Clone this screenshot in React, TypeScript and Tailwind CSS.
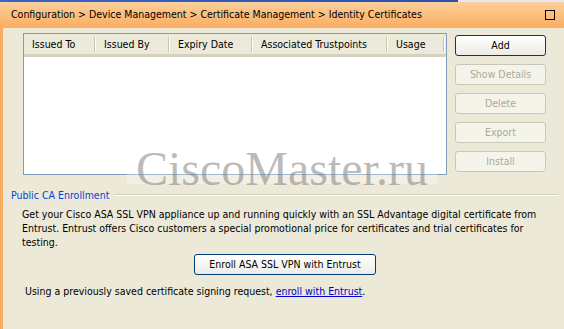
import React from "react";

const font = { fontFamily: '"DejaVu Sans Condensed", "Liberation Sans", sans-serif' };

function Btn({ label, enabled = false, className = "" }: { label: string; enabled?: boolean; className?: string }) {
  return (
    <div
      className={
        "flex items-center justify-center rounded-[3px] border text-[10.5px] " +
        (enabled
          ? "border-[#003c74] bg-gradient-to-b from-[#ffffff] to-[#ecebe6] text-black"
          : "border-[#c9c7ba] bg-[#f5f4ea] text-[#aca899]") +
        " " +
        className
      }
    >
      {label}
    </div>
  );
}

const cols = [
  { label: "Issued To", w: "w-[72px]" },
  { label: "Issued By", w: "w-[74px]" },
  { label: "Expiry Date", w: "w-[83px]" },
  { label: "Associated Trustpoints", w: "w-[135px]" },
  { label: "Usage", w: "w-[57px]" },
];

export default function App() {
  return (
    <div className="relative w-[564px] h-[329px] overflow-hidden bg-[#ece9d8] text-black" style={font}>
      {/* top strip */}
      <div className="flex h-[2px]">
        <div className="w-[458px] bg-gradient-to-r from-[#3c64c8] to-[#2a4fb0]" />
        <div className="flex-1 bg-[#e8e8f4]" />
      </div>
      {/* header */}
      <div className="flex h-[26px] items-center justify-between bg-gradient-to-b from-[#fbd09a] via-[#fbbe7c] to-[#f9ad62] pl-[11px] pr-[9px] text-[10.5px]">
        <span>Configuration &gt; Device Management &gt; Certificate Management &gt; Identity Certificates</span>
        <div className="h-[10px] w-[10px] border border-black" />
      </div>
      {/* body */}
      <div className="flex h-[301px] flex-col border-l-[3px] border-[#f9ad62]">
        <div className="mt-[5px] flex">
          <div className="ml-[20px] flex h-[142px] w-[424px] flex-col border border-[#7f9db9] bg-white">
            <div className="flex h-[23px] border-b-[3px] border-[#d6d2c2] bg-[#ebeadb] pt-[1px] text-[10.5px]">
              {cols.map((c) => (
                <div key={c.label} className={"flex h-full items-center " + c.w}>
                  <span className="flex-1 pl-[8px]">{c.label}</span>
                  <div className="flex h-[15px] w-[2px]">
                    <div className="w-[1px] bg-[#c7c5b2]" />
                    <div className="w-[1px] bg-white" />
                  </div>
                </div>
              ))}
            </div>
          </div>
          <div className="ml-[8px] mt-[2px] flex flex-col gap-[8px]">
            <Btn label="Add" enabled className="h-[21px] w-[91px]" />
            <Btn label="Show Details" className="h-[21px] w-[91px]" />
            <Btn label="Delete" className="h-[21px] w-[91px]" />
            <Btn label="Export" className="h-[21px] w-[91px]" />
            <Btn label="Install" className="h-[21px] w-[91px]" />
          </div>
        </div>
        {/* Public CA enrollment */}
        <div className="mt-[13px] flex h-[14px] items-center pl-[8px] pr-[6px]">
          <span className="text-[10.5px] leading-[14px] text-[#0046d5]">Public CA Enrollment</span>
          <div className="ml-[6px] h-[2px] flex-1 border-t border-b border-t-[#d0d0bf] border-b-white" />
        </div>
        <div className="mt-[5px] pl-[19px] text-[10.5px] leading-[14px]">
          <div>Get your Cisco ASA SSL VPN appliance up and running quickly with an SSL Advantage digital certificate from</div>
          <div>Entrust. Entrust offers Cisco customers a special promotional price for certificates and trial certificates for</div>
          <div>testing.</div>
        </div>
        <div className="mt-[5px] flex pl-[191px]">
          <Btn label="Enroll ASA SSL VPN with Entrust" enabled className="h-[21px] w-[182px]" />
        </div>
        <div className="mt-[9px] pl-[22px] text-[10.5px] leading-[14px]">
          Using a previously saved certificate signing request,{" "}
          <span className="text-[#0000cc] underline">enroll with Entrust</span>.
        </div>
      </div>
      {/* watermark */}
      <div
        className="absolute left-[127px] top-[141px] flex h-[43px] w-[310px] items-end justify-center overflow-visible bg-[rgba(255,255,255,0.3)] text-[48px] leading-[48px] text-[rgba(120,120,120,0.5)]"
        style={{ fontFamily: '"Liberation Serif", serif' }}
      >
        <span className="relative top-[9px]">CiscoMaster.ru</span>
      </div>
    </div>
  );
}
